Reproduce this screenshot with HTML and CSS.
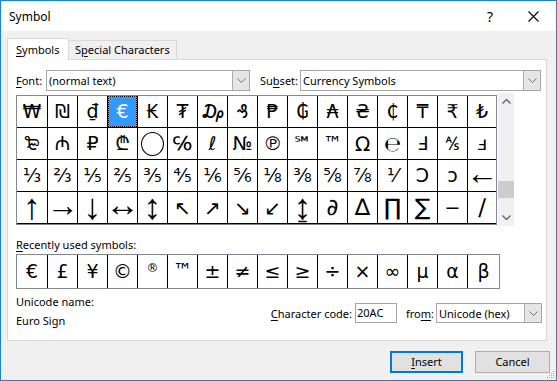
FILE: index.html
```html
<!DOCTYPE html>
<html lang="en">
<head>
    <meta charset="UTF-8">
    <title>Symbol</title>
    <link rel="stylesheet" href="styles.css">
</head>
<body>
<div class="dialog">
    <!-- Barra de título -->
    <div class="titlebar">
        <span class="title">Symbol</span>
        <span class="help">?</span>
        <span class="close">
            <svg width="11" height="11" viewBox="0 0 11 11"><path d="M0.5 0.5 L10.5 10.5 M10.5 0.5 L0.5 10.5" stroke="#000" stroke-width="1.1" fill="none"/></svg>
        </span>
    </div>

    <div class="content">
        <div class="tabs">
            <div class="tab active"><u>S</u>ymbols</div>
            <div class="tab">S<u>p</u>ecial Characters</div>
        </div>

        <div class="panel">
            <div class="font-row">
                <span class="lbl lbl-font"><u>F</u>ont:</span>
                <div class="combo combo-font">
                    <span class="combo-text">(normal text)</span>
                    <span class="drop"><svg width="9" height="5" viewBox="0 0 9 5"><path d="M0.5 0.5 L4.5 4.5 L8.5 0.5" stroke="#6d6d6d" fill="none"/></svg></span>
                </div>
                <span class="lbl lbl-subset">Su<u>b</u>set:</span>
                <div class="combo combo-subset">
                    <span class="combo-text">Currency Symbols</span>
                    <span class="drop"><svg width="9" height="5" viewBox="0 0 9 5"><path d="M0.5 0.5 L4.5 4.5 L8.5 0.5" stroke="#6d6d6d" fill="none"/></svg></span>
                </div>
            </div>

            <!-- Tabla de símbolos -->
            <div class="grid-row">
                <div class="grid">
                    <div class="cells">
                        <span>&#x20A9;</span><span>&#x20AA;</span><span>&#x20AB;</span><span class="selected">&#x20AC;</span><span>&#x20AD;</span><span>&#x20AE;</span><span>&#x20AF;</span><span>&#x20B0;</span><span>&#x20B1;</span><span>&#x20B2;</span><span>&#x20B3;</span><span>&#x20B4;</span><span>&#x20B5;</span><span>&#x20B8;</span><span>&#x20B9;</span><span>&#x20BA;</span>
                        <span>&#x20BB;</span><span>&#x20BC;</span><span>&#x20BD;</span><span>&#x20BE;</span><span><i class="ring"></i></span><span>&#x2105;</span><span>&#x2113;</span><span>&#x2116;</span><span>&#x2117;</span><span class="sup">&#x2120;</span><span class="sup">&#x2122;</span><span class="mid">&#x2126;</span><span class="mid">&#x212E;</span><span>&#x2132;</span><span>&#x214D;</span><span>&#x214E;</span>
                        <span>&#x2153;</span><span>&#x2154;</span><span>&#x2155;</span><span>&#x2156;</span><span>&#x2157;</span><span>&#x2158;</span><span>&#x2159;</span><span>&#x215A;</span><span>&#x215B;</span><span>&#x215C;</span><span>&#x215D;</span><span>&#x215E;</span><span>&#x215F;</span><span>&#x2183;</span><span>&#x2184;</span><span class="arr">&#x2190;</span>
                        <span class="arr tall">&#x2191;</span><span class="arr">&#x2192;</span><span class="arr tall">&#x2193;</span><span class="arr wide">&#x2194;</span><span class="arr tall">&#x2195;</span><span class="diag">&#x2196;</span><span class="diag">&#x2197;</span><span class="diag">&#x2198;</span><span class="diag">&#x2199;</span><span class="arr tall">&#x21A8;</span><span class="big">&#x2202;</span><span class="big">&#x2206;</span><span class="big">&#x220F;</span><span class="big">&#x2211;</span><span>&#x2212;</span><span class="big">&#x2215;</span>
                    </div>
                </div>
                <div class="scrollbar">
                    <span class="sb-btn"><svg width="9" height="5" viewBox="0 0 9 5"><path d="M0.5 4.5 L4.5 0.5 L8.5 4.5" stroke="#606060" stroke-width="1.3" fill="none"/></svg></span>
                    <span class="sb-track"><span class="sb-thumb"></span></span>
                    <span class="sb-btn"><svg width="9" height="5" viewBox="0 0 9 5"><path d="M0.5 0.5 L4.5 4.5 L8.5 0.5" stroke="#606060" stroke-width="1.3" fill="none"/></svg></span>
                </div>
            </div>

            <div class="recent-lbl"><u>R</u>ecently used symbols:</div>
            <div class="recent">
                <div class="cells recent-cells">
                    <span>&#x20AC;</span><span>&#xA3;</span><span>&#xA5;</span><span>&#xA9;</span><span class="sup small">&#xAE;</span><span class="sup">&#x2122;</span><span>&#xB1;</span><span>&#x2260;</span><span>&#x2264;</span><span>&#x2265;</span><span>&#xF7;</span><span>&#xD7;</span><span>&#x221E;</span><span>&#xB5;</span><span>&#x3B1;</span><span>&#x3B2;</span>
                </div>
            </div>

            <div class="info-row">
                <div class="uname">
                    <div>Unicode name:</div>
                    <div class="uname-value">Euro Sign</div>
                </div>
                <div class="code-group">
                    <span class="lbl lbl-code"><u>C</u>haracter code:</span>
                    <div class="input">20AC</div>
                    <span class="lbl lbl-from">fro<u>m</u>:</span>
                    <div class="combo combo-from">
                        <span class="combo-text">Unicode (hex)</span>
                        <span class="drop"><svg width="9" height="5" viewBox="0 0 9 5"><path d="M0.5 0.5 L4.5 4.5 L8.5 0.5" stroke="#6d6d6d" fill="none"/></svg></span>
                    </div>
                </div>
            </div>
        </div>

        <div class="buttons">
            <div class="btn default"><u>I</u>nsert</div>
            <div class="btn">Cancel</div>
        </div>
    </div>

    <!-- Agarre de redimensionado -->
    <svg class="grip" width="8" height="8" viewBox="0 0 8 8">
        <rect x="6" y="0" width="1" height="1" fill="#b0b0b0"/>
        <rect x="4" y="2" width="1" height="1" fill="#b0b0b0"/>
        <rect x="6" y="2" width="1" height="1" fill="#b0b0b0"/>
        <rect x="2" y="4" width="1" height="1" fill="#b0b0b0"/>
        <rect x="4" y="4" width="1" height="1" fill="#b0b0b0"/>
        <rect x="6" y="4" width="1" height="1" fill="#b0b0b0"/>
        <rect x="0" y="6" width="1" height="1" fill="#b0b0b0"/>
        <rect x="2" y="6" width="1" height="1" fill="#b0b0b0"/>
        <rect x="4" y="6" width="1" height="1" fill="#b0b0b0"/>
        <rect x="6" y="6" width="1" height="1" fill="#b0b0b0"/>
    </svg>
</div>
</body>
</html>
```

FILE: styles.css
```css
* {
    margin: 0;
    padding: 0;
    box-sizing: border-box;
}

body {
    width: 557px;
    height: 381px;
    font-family: 'Noto Sans', 'Open Sans', sans-serif;
    font-size: 11px;
    color: #000;
    background: #fff;
    overflow: hidden;
}

u {
    text-decoration: underline;
    text-underline-offset: 2px;
}

.dialog {
    position: relative;
    width: 557px;
    height: 381px;
    border: 1px solid #1883d7;
    display: flex;
    flex-direction: column;
    background: #f0f0f0;
}

/* Barra de título */
.titlebar {
    height: 30px;
    background: #fff;
    display: flex;
    align-items: center;
    padding-left: 8px;
    font-size: 12px;
}

.help {
    margin-left: auto;
    font-size: 14px;
}

.close {
    display: flex;
    margin-left: 35px;
    margin-right: 17px;
}

.content {
    flex: 1;
    padding: 7px 9px 0 6px;
}

/* Pestañas */
.tabs {
    display: flex;
    align-items: flex-end;
    height: 21px;
}

.tab {
    height: 19px;
    padding: 0 6px;
    line-height: 18px;
    border: 1px solid #d9d9d9;
    border-left: none;
    border-bottom: none;
    background: #f0f0f0;
}

.tab.active {
    height: 22px;
    width: 62px;
    padding-left: 8px;
    margin-bottom: -1px;
    line-height: 21px;
    border-left: 1px solid #d9d9d9;
    background: #fff;
    position: relative;
    z-index: 1;
}

.panel {
    height: 282px;
    background: #fff;
    border: 1px solid #d9d9d9;
    padding: 0 4px 0 8px;
}

.font-row {
    margin-top: 10px;
    height: 21px;
    display: flex;
    align-items: center;
}

.lbl-font {
    width: 30px;
}

.lbl-subset {
    width: 40px;
    margin-left: 10px;
}

.combo {
    height: 21px;
    display: flex;
    align-items: center;
    border: 1px solid #a6a6a6;
    background: #fff;
}

.combo-text {
    flex: 1;
    padding-left: 2px;
    white-space: nowrap;
}

.drop {
    width: 17px;
    height: 19px;
    display: flex;
    align-items: center;
    justify-content: center;
    background: #e5e5e5;
    border-left: 1px solid #acacac;
}

.combo-font {
    width: 204px;
}

.combo-subset {
    width: 241px;
}

/* Tabla de símbolos */
.grid-row {
    margin-top: 4px;
    display: flex;
    align-items: flex-start;
}

.grid,
.recent {
    border: 1px solid #828790;
    background: #fff;
}

.cells {
    display: grid;
    grid-template-columns: 30px repeat(14, 29px) 28px;
    grid-auto-rows: 31px;
    gap: 1px;
    background: #000;
    padding-bottom: 1px;
}

.cells span {
    background: #fff;
    display: flex;
    align-items: center;
    justify-content: center;
    font-family: 'DejaVu Sans', 'Noto Sans', sans-serif;
    font-size: 19px;
    line-height: 1;
}

.cells span.mid {
    font-size: 20px;
}

.cells span.big {
    font-size: 23px;
}

.cells span.arr {
    font-family: 'Liberation Sans', 'DejaVu Sans', sans-serif;
    font-size: 32px;
    line-height: 0.6;
    padding-bottom: 4px;
}

.cells span.tall {
    font-size: 36px;
    padding-bottom: 2px;
}

.cells span.wide {
    font-size: 34px;
    padding-bottom: 6px;
}

.cells span.diag {
    font-size: 20px;
}

.cells span.sup {
    align-items: flex-start;
    padding-top: 6px;
}

.cells span.small {
    font-size: 12px;
    padding-top: 7px;
}

.cells span.selected {
    background: #3399ff;
    color: #fff;
    box-shadow: inset 0 0 0 1px #e8913a;
    outline: 1px dotted #000;
    outline-offset: -1px;
}

.ring {
    display: block;
    width: 23px;
    height: 24px;
    border: 1.4px solid #000;
    border-radius: 50%;
}

.scrollbar {
    width: 16px;
    height: 133px;
    margin-top: -2px;
    margin-left: 1px;
    background: #f0f0f0;
    display: flex;
    flex-direction: column;
}

.sb-btn {
    height: 17px;
    display: flex;
    align-items: center;
    justify-content: center;
}

.sb-track {
    flex: 1;
}

.sb-thumb {
    display: block;
    margin-top: 71px;
    height: 17px;
    background: #cdcdcd;
}

.recent-lbl {
    margin-top: 11px;
    line-height: 16px;
}

.recent {
    display: inline-block;
    margin-top: 1px;
}

.recent-cells {
    grid-template-columns: 30px repeat(14, 29px) 31px;
    grid-auto-rows: 33px;
    padding-bottom: 0;
}

/* Nombre y código */
.info-row {
    margin-top: 5px;
    display: flex;
    align-items: flex-start;
}

.uname {
    line-height: 16px;
}

.uname-value {
    margin-top: 3px;
}

.code-group {
    margin-left: auto;
    margin-top: 9px;
    display: flex;
    align-items: center;
}

.lbl-code {
    margin-right: 3px;
}

.input {
    width: 42px;
    height: 20px;
    line-height: 18px;
    padding-left: 1px;
    border: 1px solid #a6a6a6;
    background: #fff;
}

.lbl-from {
    width: 30px;
    margin-left: 9px;
}

.combo-from {
    width: 106px;
    height: 20px;
}

.combo-from .drop {
    height: 18px;
}

/* Botones */
.buttons {
    margin-top: 10px;
    margin-right: -3px;
    display: flex;
    justify-content: flex-end;
    gap: 12px;
}

.btn {
    width: 75px;
    height: 22px;
    line-height: 20px;
    text-align: center;
    background: #e1e1e1;
    border: 1px solid #adadad;
}

.btn.default {
    width: 73px;
    border: 2px solid #0078d7;
    line-height: 18px;
}

.grip {
    position: absolute;
    right: 1px;
    bottom: 1px;
}
```
